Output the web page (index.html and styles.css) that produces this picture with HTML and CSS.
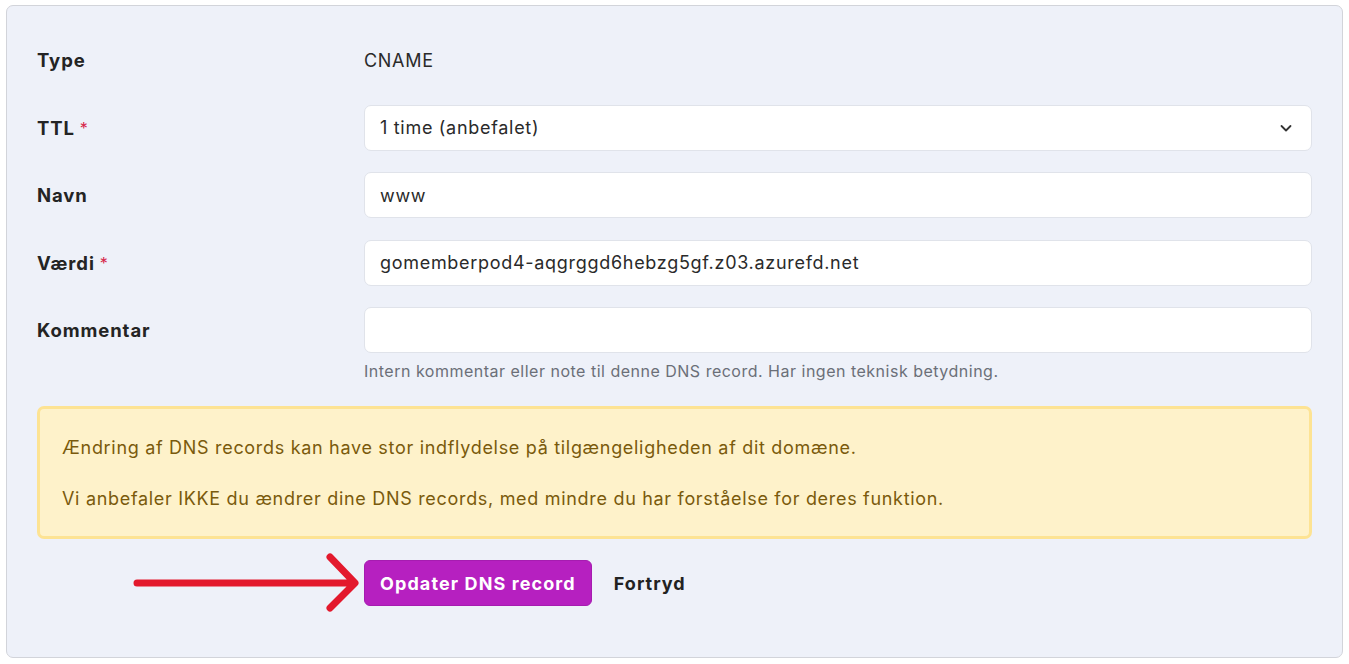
FILE: index.html
```html
<!DOCTYPE html>
<html lang="da">
<head>
<meta charset="utf-8">
<title>Opdater DNS record</title>
<link rel="stylesheet" href="styles.css">
</head>
<body>
<div class="page">
  <form class="card">
    <div class="row">
      <div class="label">Type</div>
      <div class="field static">CNAME</div>
    </div>
    <div class="row">
      <div class="label">TTL <span class="req">*</span></div>
      <div class="field">
        <div class="input select">
          <span>1 time (anbefalet)</span>
          <svg class="chev" width="16" height="16" viewBox="0 0 16 16"><path d="M3.5 6l4.5 4.5L12.5 6" fill="none" stroke="#333" stroke-width="1.8" stroke-linecap="round" stroke-linejoin="round"/></svg>
        </div>
      </div>
    </div>
    <div class="row">
      <div class="label">Navn</div>
      <div class="field"><div class="input">www</div></div>
    </div>
    <div class="row">
      <div class="label">Værdi <span class="req">*</span></div>
      <div class="field"><div class="input">gomemberpod4-aqgrggd6hebzg5gf.z03.azurefd.net</div></div>
    </div>
    <div class="row">
      <div class="label">Kommentar</div>
      <div class="field">
        <div class="input"></div>
        <div class="help">Intern kommentar eller note til denne DNS record. Har ingen teknisk betydning.</div>
      </div>
    </div>
    <div class="warning">
      <p>Ændring af DNS records kan have stor indflydelse på tilgængeligheden af dit domæne.</p>
      <p>Vi anbefaler IKKE du ændrer dine DNS records, med mindre du har forståelse for deres funktion.</p>
    </div>
    <div class="actions">
      <svg class="arrow" width="240" height="60" viewBox="0 0 240 60"><path d="M5 30H220M198 4l25 26-25 25" fill="none" stroke="#e3192d" stroke-width="7" stroke-linecap="round" stroke-linejoin="round"/></svg>
      <button type="button" class="btn">Opdater DNS record</button>
      <span class="cancel">Fortryd</span>
    </div>
  </form>
</div>
</body>
</html>
```
FILE: styles.css
```css
* { box-sizing: border-box; }
html, body { margin: 0; background: #fff; }
body { font-family: Inter, "DejaVu Sans", sans-serif; color: #222; }
.page { padding: 5px 6px 5px 6px; }
.card {
  background: #eef1f9;
  border: 1px solid #d2d4da;
  border-radius: 7px;
  padding: 31px 30px 51px 30px;
  display: flex;
  flex-direction: column;
  gap: 21.5px;
}
.row { display: grid; grid-template-columns: 327px 1fr; align-items: start; }
.label { font-weight: 700; font-size: 18.5px; letter-spacing: 0.9px; color: #242424; height: 46px; display: flex; align-items: center; }
.req { color: #d6264a; font-weight: 400; margin-left: 5px; font-size: 16px; letter-spacing: 0; }
.static { height: 46px; display: flex; align-items: center; font-size: 18px; letter-spacing: 0.7px; color: #2a2a2a; }
.input {
  height: 46px;
  background: #fff;
  border: 1px solid #e0e3ea;
  border-radius: 7px;
  padding: 0 15px;
  display: flex;
  align-items: center;
  font-size: 18px;
  letter-spacing: 0.7px;
  color: #2a2a2a;
}
.select { justify-content: space-between; padding-right: 17px; }
.help { font-size: 16px; letter-spacing: 0.5px; color: #6b6f78; margin-top: 8px; }
.warning {
  margin-top: 3px;
  background: #fef2ca;
  border: 3px solid #fde393;
  border-radius: 7px;
  padding: 25px 22px 24px 22px;
  color: #7a5a0c;
  font-size: 18px;
  letter-spacing: 0.69px;
}
.warning p { margin: 0; line-height: 27px; }
.warning p + p { margin-top: 24px; }
.actions { position: relative; display: flex; align-items: center; gap: 22px; padding-left: 327px; }
.arrow { position: absolute; left: 95px; top: -7px; }
.btn {
  font-family: inherit;
  background: #b620c0;
  color: #fff;
  border: 1px solid #a61cb0;
  border-radius: 6px;
  height: 46px;
  padding: 0 15px;
  font-size: 18px;
  font-weight: 700;
  letter-spacing: 1.1px;
}
.cancel { font-size: 18px; font-weight: 700; letter-spacing: 1px; color: #222; }
```
